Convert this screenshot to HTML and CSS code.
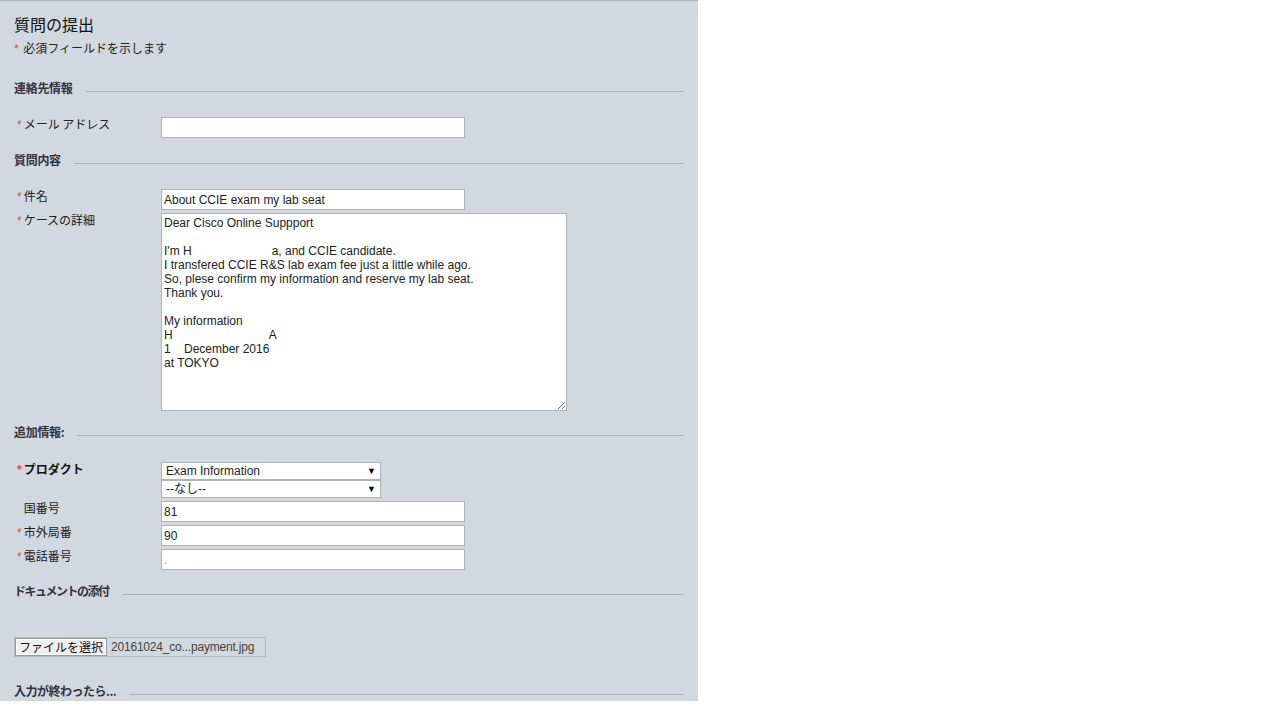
FILE: index.html
```html
<!DOCTYPE html>
<html lang="ja">
<head>
<meta charset="utf-8">
<title>質問の提出</title>
<link rel="stylesheet" href="styles.css">
</head>
<body>
<div class="panel">
  <h1 class="title">質問の提出</h1>
  <p class="note"><span class="req">*</span> 必須フィールドを示します</p>

  <div class="section s-contact"><span class="section-title">連絡先情報</span><span class="rule"></span></div>
  <div class="row r-email">
    <label class="label"><span class="req">*</span>メール アドレス</label>
    <input class="field" type="text" value="">
  </div>

  <div class="section s-question"><span class="section-title">質問内容</span><span class="rule"></span></div>
  <div class="row r-subject">
    <label class="label"><span class="req">*</span>件名</label>
    <input class="field" type="text" value="About CCIE exam my lab seat">
  </div>
  <div class="row r-detail">
    <label class="label"><span class="req">*</span>ケースの詳細</label>
    <textarea class="detail">Dear Cisco Online Suppport

I'm H                        a, and CCIE candidate.
I transfered CCIE R&amp;S lab exam fee just a little while ago.
So, plese confirm my information and reserve my lab seat.
Thank you.

My information
H                             A
1    December 2016
at TOKYO</textarea>
  </div>

  <div class="section s-extra"><span class="section-title">追加情報:</span><span class="rule"></span></div>
  <div class="row r-product">
    <label class="label bold"><span class="req">*</span>プロダクト</label>
    <div class="selects">
      <div class="select-wrap"><select class="select"><option>Exam Information</option></select></div>
      <div class="select-wrap"><select class="select"><option>--なし--</option></select></div>
    </div>
  </div>
  <div class="row r-tight">
    <label class="label"><span class="req blank">*</span>国番号</label>
    <input class="field" type="text" value="81">
  </div>
  <div class="row r-tight">
    <label class="label"><span class="req">*</span>市外局番</label>
    <input class="field" type="text" value="90">
  </div>
  <div class="row r-tight">
    <label class="label"><span class="req">*</span>電話番号</label>
    <input class="field dot" type="text" value=".">
  </div>

  <div class="section s-doc"><span class="section-title narrow">ドキュメントの添付</span><span class="rule"></span></div>
  <div class="file">
    <span class="file-btn">ファイルを選択</span><span class="file-name">20161024_co...payment.jpg</span>
  </div>

  <div class="section s-done"><span class="section-title narrower">入力が終わったら...</span><span class="rule"></span></div>
</div>
</body>
</html>
```

FILE: styles.css
```css
* { box-sizing: border-box; }

html, body {
  margin: 0;
  padding: 0;
  background: #ffffff;
}

body {
  font-family: "Liberation Sans", "Noto Sans CJK JP", sans-serif;
  font-size: 12px;
  color: #222;
}

.panel {
  width: 698px;
  height: 701px;
  overflow: hidden;
  background: #d1d8df;
  border-top: 1px solid #a9b5c1;
  padding: 0 14px;
}

.title {
  margin: 13px 0 0;
  font-size: 16px;
  line-height: 20px;
  font-weight: normal;
  color: #111;
  font-family: "Noto Sans CJK JP", sans-serif;
}

.note {
  margin: 6px 0 0;
  line-height: 16px;
  font-size: 12px;
  color: #222;
  font-family: "Noto Sans CJK JP", sans-serif;
}

.req {
  color: #e8414f;
  font-family: "Liberation Sans", sans-serif;
  margin-right: 2px;
}
.req.blank { visibility: hidden; }

.section {
  display: flex;
  align-items: flex-start;
  gap: 13px;
  height: 16px;
}
.section-title {
  font-family: "Noto Sans CJK JP", sans-serif;
  font-weight: bold;
  font-size: 12px;
  line-height: 16px;
  color: #33333f;
  white-space: nowrap;
  letter-spacing: -0.3px;
}
.section-title.narrow { letter-spacing: -1.5px; }
.section-title.narrower { letter-spacing: -0.5px; }
.rule {
  flex: 1;
  margin-top: 11px;
  border-top: 1px solid #a9b2ba;
}

.s-contact { margin-top: 23px; }
.s-question { margin-top: 14px; }
.s-extra { margin-top: 13px; }
.s-doc { margin-top: 13px; }
.s-done { margin-top: 26px; }

.row {
  display: flex;
  align-items: flex-start;
}
.label {
  width: 147px;
  flex: none;
  padding-left: 3px;
  line-height: 16px;
  font-family: "Noto Sans CJK JP", sans-serif;
  font-size: 12px;
  color: #222;
  margin-top: -1px;
}
.label.bold { font-weight: bold; color: #111; }

.r-email { margin-top: 21px; }
.r-subject { margin-top: 21px; }
.r-detail { margin-top: 3px; }
.r-product { margin-top: 22px; }
.r-tight { margin-top: 3px; }

.field {
  width: 304px;
  height: 21px;
  margin: 0;
  border: 1px solid #a9b4bc;
  background: #fff;
  padding: 0 2px;
  font-family: "Liberation Sans", "Noto Sans CJK JP", sans-serif;
  font-size: 12px;
  color: #222;
  outline: none;
}
.field.dot { color: #d08040; }

.detail {
  width: 406px;
  height: 198px;
  margin: 0;
  border: 1px solid #a9b4bc;
  background: #fff;
  padding: 2px 2px 1px;
  font-family: "Liberation Sans", sans-serif;
  font-size: 12px;
  line-height: 14px;
  color: #222;
  resize: both;
  overflow: hidden;
  outline: none;
}

.selects {
  display: flex;
  flex-direction: column;
}
.select-wrap {
  position: relative;
  width: 220px;
  height: 18px;
}
.select-wrap::after {
  content: "▼";
  position: absolute;
  right: 5px;
  top: 2px;
  font-size: 9px;
  line-height: 14px;
  color: #000;
  pointer-events: none;
}
.select {
  -webkit-appearance: none;
  appearance: none;
  width: 220px;
  height: 18px;
  margin: 0;
  border: 1px solid #a9b4bc;
  border-radius: 0;
  background: #fff;
  padding: 0 4px;
  font-family: "Liberation Sans", "Noto Sans CJK JP", sans-serif;
  font-size: 12px;
  color: #222;
  outline: none;
}

.file {
  margin-top: 38px;
  display: inline-flex;
  height: 20px;
  width: 252px;
  border: 1px solid #b4bcc3;
  background: #d1d8df;
}
.file-btn {
  width: 92px;
  height: 18px;
  background: #efefef;
  border: 1px solid #9a9a9a;
  font-family: "Noto Sans CJK JP", sans-serif;
  font-size: 12px;
  line-height: 16px;
  text-align: center;
  color: #111;
  box-shadow: inset 0 0 0 1px #fff;
}
.file-name {
  padding-left: 4px;
  font-family: "Liberation Sans", sans-serif;
  font-size: 12px;
  line-height: 18px;
  color: #444;
  white-space: nowrap;
  letter-spacing: -0.2px;
}
```
